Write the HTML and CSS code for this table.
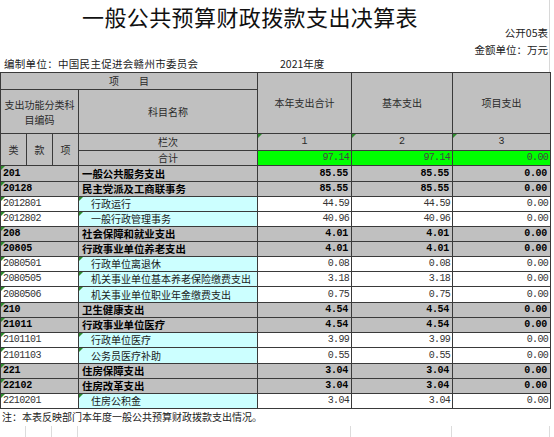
FILE: index.html
```html
<!DOCTYPE html>
<html lang="zh">
<head>
<meta charset="utf-8">
<title>一般公共预算财政拨款支出决算表</title>
<link rel="stylesheet" href="styles.css">
</head>
<body>
<div class="sheet">
  <div class="top">
    <div class="title">一般公共预算财政拨款支出决算表</div>
    <div class="meta meta1">公开05表</div>
    <div class="meta meta2">金额单位：万元</div>
    <div class="unitrow">
      <span class="unit">编制单位：中国民主促进会赣州市委员会</span>
      <span class="year">2021年度</span>
    </div>
  </div>
  <table class="grid">
    <colgroup>
      <col class="c26"><col class="c26"><col class="c26"><col class="c179"><col class="c94"><col class="c101"><col class="c98">
    </colgroup>
    <tr class="h1">
      <td class="hd" colspan="4">项　　目</td>
      <td class="hd" rowspan="2">本年支出合计</td>
      <td class="hd" rowspan="2">基本支出</td>
      <td class="hd" rowspan="2">项目支出</td>
    </tr>
    <tr class="h2">
      <td class="hd small" colspan="3"><span class="ln">支出功能分类科</span><span class="ln">目编码</span></td>
      <td class="hd">科目名称</td>
    </tr>
    <tr class="h3">
      <td class="hd" rowspan="2">类</td>
      <td class="hd" rowspan="2">款</td>
      <td class="hd" rowspan="2">项</td>
      <td class="hd">栏次</td>
      <td class="hd num-h tri">1</td>
      <td class="hd num-h tri">2</td>
      <td class="hd num-h tri">3</td>
    </tr>
    <tr class="h4">
      <td class="hd">合计</td>
      <td class="tot">97.14</td>
      <td class="tot">97.14</td>
      <td class="tot">0.00</td>
    </tr>
    <tr class="b tall"><td colspan="3" class="code tri">201</td><td class="name">一般公共服务支出</td><td class="n">85.55</td><td class="n">85.55</td><td class="n">0.00</td></tr>
    <tr class="b"><td colspan="3" class="code tri">20128</td><td class="name">民主党派及工商联事务</td><td class="n">85.55</td><td class="n">85.55</td><td class="n">0.00</td></tr>
    <tr class="d"><td colspan="3" class="code tri">2012801</td><td class="name tri">行政运行</td><td class="n">44.59</td><td class="n">44.59</td><td class="n">0.00</td></tr>
    <tr class="d"><td colspan="3" class="code tri">2012802</td><td class="name tri">一般行政管理事务</td><td class="n">40.96</td><td class="n">40.96</td><td class="n">0.00</td></tr>
    <tr class="b"><td colspan="3" class="code tri">208</td><td class="name">社会保障和就业支出</td><td class="n">4.01</td><td class="n">4.01</td><td class="n">0.00</td></tr>
    <tr class="b"><td colspan="3" class="code tri">20805</td><td class="name">行政事业单位养老支出</td><td class="n">4.01</td><td class="n">4.01</td><td class="n">0.00</td></tr>
    <tr class="d"><td colspan="3" class="code tri">2080501</td><td class="name tri">行政单位离退休</td><td class="n">0.08</td><td class="n">0.08</td><td class="n">0.00</td></tr>
    <tr class="d"><td colspan="3" class="code tri">2080505</td><td class="name tri">机关事业单位基本养老保险缴费支出</td><td class="n">3.18</td><td class="n">3.18</td><td class="n">0.00</td></tr>
    <tr class="d tall"><td colspan="3" class="code tri">2080506</td><td class="name tri">机关事业单位职业年金缴费支出</td><td class="n">0.75</td><td class="n">0.75</td><td class="n">0.00</td></tr>
    <tr class="b"><td colspan="3" class="code tri">210</td><td class="name">卫生健康支出</td><td class="n">4.54</td><td class="n">4.54</td><td class="n">0.00</td></tr>
    <tr class="b"><td colspan="3" class="code tri">21011</td><td class="name">行政事业单位医疗</td><td class="n">4.54</td><td class="n">4.54</td><td class="n">0.00</td></tr>
    <tr class="d"><td colspan="3" class="code tri">2101101</td><td class="name tri">行政单位医疗</td><td class="n">3.99</td><td class="n">3.99</td><td class="n">0.00</td></tr>
    <tr class="d tall"><td colspan="3" class="code tri">2101103</td><td class="name tri">公务员医疗补助</td><td class="n">0.55</td><td class="n">0.55</td><td class="n">0.00</td></tr>
    <tr class="b"><td colspan="3" class="code tri">221</td><td class="name">住房保障支出</td><td class="n">3.04</td><td class="n">3.04</td><td class="n">0.00</td></tr>
    <tr class="b"><td colspan="3" class="code tri">22102</td><td class="name">住房改革支出</td><td class="n">3.04</td><td class="n">3.04</td><td class="n">0.00</td></tr>
    <tr class="d"><td colspan="3" class="code tri">2210201</td><td class="name tri">住房公积金</td><td class="n">3.04</td><td class="n">3.04</td><td class="n">0.00</td></tr>
  </table>
  <div class="note">注：本表反映部门本年度一般公共预算财政拨款支出情况。</div>
  <div class="blank">
    <span class="g26"></span><span class="g26"></span><span class="g26"></span><span class="g273"></span><span class="g101"></span><span class="g98"></span>
  </div>
</div>
</body>
</html>
```

FILE: styles.css
```css
html, body {
  margin: 0;
  padding: 0;
  background: #ffffff;
}
body {
  font-family: "Noto Sans CJK SC", "Noto Sans", sans-serif;
  color: #1a1a1a;
  width: 554px;
  height: 437px;
  overflow: hidden;
}
.sheet {
  width: 550px;
}
.top {
  border-right: 1px solid #d8d8d8;
  width: 549px;
}
.title {
  height: 27px;
  line-height: 32px;
  font-size: 22px;
  padding-left: 82px;
  color: #111;
  letter-spacing: 0.4px;
  white-space: nowrap;
}
.meta {
  font-size: 10.5px;
  text-align: right;
  height: 12px;
  line-height: 12px;
  padding-right: 1px;
  color: #222;
}
.meta2 {
  margin-top: 5px;
}
.unitrow {
  height: 16px;
  line-height: 16px;
  font-size: 10.5px;
  display: flex;
  color: #222;
}
.unit {
  padding-left: 4px;
  width: 276px;
  letter-spacing: 0.3px;
  white-space: nowrap;
}
.year {
  font-size: 10.5px;
}
.grid {
  border-collapse: collapse;
  table-layout: fixed;
  width: 550px;
}
.c26 { width: 26px; }
.c179 { width: 179px; }
.c94 { width: 94px; }
.c101 { width: 101px; }
.c98 { width: 98px; }
.grid td {
  border: 1px solid #3a3a3a;
  padding: 0;
  font-size: 10px;
  line-height: 12px;
  white-space: nowrap;
  overflow: hidden;
  position: relative;
}
.hd {
  background: #c0c0c0;
  text-align: center;
  color: #2a2a2a;
}
.h1 td { height: 16px; }
.h2 td { height: 43px; }
.h3 td { height: 16px; }
.h4 td { height: 14px; }
.ln {
  display: block;
  line-height: 15px;
  height: 15px;
}
.num-h {
  font-family: "Liberation Mono", monospace;
}
.tot {
  background: #00ff00;
  text-align: right;
  font-family: "Liberation Mono", monospace;
  letter-spacing: -0.7px;
  padding-right: 2px !important;
  color: #444;
}
.grid tr.b td,
.grid tr.d td {
  height: 14px;
}
.grid tr.tall td {
  height: 15px;
}
.b td {
  background: #c0c0c0;
  font-weight: 700;
  color: #000;
}
.d td {
  background: #ffffff;
}
.d td.name {
  background: #ccffff;
  padding-left: 12px;
}
.b td.name {
  padding-left: 3px;
  font-size: 10.4px;
}
.code {
  font-family: "Liberation Mono", monospace;
  padding-left: 2px !important;
  letter-spacing: -0.6px;
}
.b .code {
  letter-spacing: -0.2px;
}
.n {
  text-align: right;
  font-family: "Liberation Mono", monospace;
  letter-spacing: -0.7px;
  padding-right: 2px !important;
}
.b .n {
  letter-spacing: -0.3px;
  padding-right: 3px !important;
}
.d .n, .d .code {
  color: #333;
}
.tri::before {
  content: "";
  position: absolute;
  left: 0;
  top: 0;
  border-top: 4px solid #2e8b2e;
  border-right: 4px solid transparent;
}
.note {
  height: 16px;
  line-height: 16px;
  font-size: 10px;
  padding-left: 2px;
  color: #222;
  white-space: nowrap;
}
.blank {
  display: flex;
  height: 14px;
  margin-top: 1px;
}
.blank span {
  border-right: 1px solid #dcdcdc;
  box-sizing: border-box;
}
.g26 { width: 26px; }
.g273 { width: 273px; }
.g101 { width: 101px; }
.g98 { width: 98px; }
```
